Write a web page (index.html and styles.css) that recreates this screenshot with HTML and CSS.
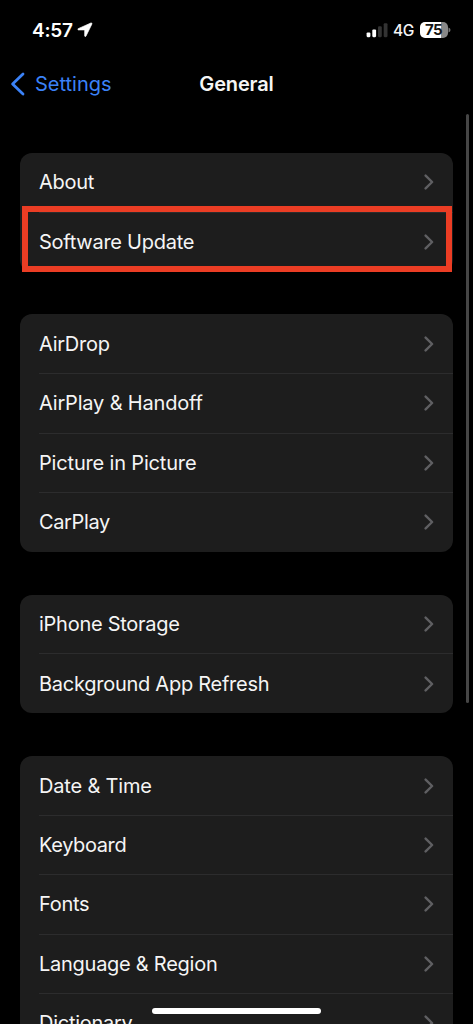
FILE: index.html
```
<!DOCTYPE html>
<html lang="en">
<head>
<meta charset="utf-8">
<title>General</title>
<link rel="stylesheet" href="styles.css">
</head>
<body>
<svg class="defs" width="0" height="0" aria-hidden="true"><symbol id="chevron" viewBox="0 0 10 16"><path d="M1.6 1.6 8.1 8 1.6 14.4" fill="none" stroke="#5f5f62" stroke-width="2.4" stroke-linecap="round" stroke-linejoin="round"/></symbol></svg>
<div class="screen">
  <header class="status">
    <div class="clock"><span class="time">4:57</span>
      <svg class="location" width="16" height="16" viewBox="0 0 16 16"><path d="M13.9 1 1.2 6.7Q.3 7.5 1.4 7.9H7.2Q7.7 7.9 7.7 8.4V14Q8.1 15.1 8.9 14.2L14.9 2Q15.2.6 13.9 1Z" fill="#fff" stroke="#fff" stroke-width=".7" stroke-linejoin="round"/></svg>
    </div>
    <div class="indicators">
      <svg class="signal" width="22" height="15" viewBox="0 0 22 15"><rect x=".6" y="9.5" width="3.8" height="4.7" rx="1.1" fill="#fff"/><rect x="6.3" y="6.5" width="3.8" height="7.7" rx="1.1" fill="#fff"/><rect x="12" y="3.3" width="3.8" height="10.9" rx="1.1" fill="#333"/><rect x="17.7" y=".2" width="3.8" height="14" rx="1.1" fill="#333"/></svg>
      <span class="network">4G</span>
      <div class="battery"><span class="level">75</span></div>
      <svg class="cap" width="3" height="6" viewBox="0 0 3 6"><path d="M.5.5Q2.5 1.4 2.5 3T.5 5.5Z" fill="#777"/></svg>
    </div>
  </header>
  <nav class="nav">
    <a class="back"><svg width="15" height="24" viewBox="0 0 15 24"><path d="M13 2 2.6 12 13 22" fill="none" stroke="#3b82f7" stroke-width="2.8" stroke-linecap="round" stroke-linejoin="round"/></svg><span>Settings</span></a>
    <h1 class="title">General</h1>
  </nav>
  <main class="groups">
    <section class="group">
      <div class="row"><span>About</span><svg class="chev"><use href="#chevron"/></svg></div>
      <div class="row"><span>Software Update</span><svg class="chev"><use href="#chevron"/></svg></div>
      <div class="highlight"></div>
    </section>
    <section class="group">
      <div class="row"><span>AirDrop</span><svg class="chev"><use href="#chevron"/></svg></div>
      <div class="row"><span class="wide">AirPlay &amp; Handoff</span><svg class="chev"><use href="#chevron"/></svg></div>
      <div class="row"><span class="wide">Picture in Picture</span><svg class="chev"><use href="#chevron"/></svg></div>
      <div class="row"><span class="tight">CarPlay</span><svg class="chev"><use href="#chevron"/></svg></div>
    </section>
    <section class="group">
      <div class="row"><span>iPhone Storage</span><svg class="chev"><use href="#chevron"/></svg></div>
      <div class="row"><span>Background App Refresh</span><svg class="chev"><use href="#chevron"/></svg></div>
    </section>
    <section class="group">
      <div class="row"><span class="wide">Date &amp; Time</span><svg class="chev"><use href="#chevron"/></svg></div>
      <div class="row"><span class="tight">Keyboard</span><svg class="chev"><use href="#chevron"/></svg></div>
      <div class="row"><span>Fonts</span><svg class="chev"><use href="#chevron"/></svg></div>
      <div class="row"><span>Language &amp; Region</span><svg class="chev"><use href="#chevron"/></svg></div>
      <div class="row"><span>Dictionary</span><svg class="chev"><use href="#chevron"/></svg></div>
    </section>
  </main>
  <div class="scrollbar"></div>
  <div class="home"></div>
</div>
</body>
</html>
```
FILE: styles.css
```
* { box-sizing: border-box; }
body { margin: 0; background: #000; color: #f5f5f5; font-family: Inter, "Liberation Sans", sans-serif; overflow: hidden; }
.defs { position: absolute; }
.screen { position: relative; width: 473px; height: 1024px; overflow: hidden; background: #000; }
.status { height: 60px; padding: 0 22px 0 32px; display: flex; justify-content: space-between; align-items: center; }
.clock { display: flex; align-items: center; gap: 4px; }
.time { font-size: 19px; font-weight: 600; letter-spacing: -.2px; color: #fff; }
.indicators { display: flex; align-items: center; }
.network { margin-left: 5px; width: 21px; font-size: 15.5px; font-weight: 500; letter-spacing: -.5px; white-space: nowrap; }
.battery { width: 28px; height: 16px; margin-left: 6px; padding-left: 5px; border-radius: 5px; background: linear-gradient(90deg, #fff 21px, #888 21px); display: flex; align-items: center; }
.level { color: #151515; font-size: 15px; line-height: 16px; font-weight: 700; letter-spacing: -.6px; }
.nav { height: 48px; padding: 0 10px; display: grid; grid-template-columns: 1fr auto 1fr; align-items: center; }
.back { display: flex; align-items: center; gap: 10px; color: #3b82f7; font-size: 20px; }
.title { margin: 0; font-size: 20px; font-weight: 600; letter-spacing: -.15px; }
.groups { padding: 44.8px 19.6px 0; display: flex; flex-direction: column; gap: 42.7px; }
.group { position: relative; flex: none; border-radius: 12px; background: #1d1d1d; }
.row { position: relative; height: 59.4px; padding: 0 19.4px; display: flex; align-items: center; justify-content: space-between; font-size: 20px; letter-spacing: -.26px; white-space: nowrap; }
.row .wide { letter-spacing: -.17px; }
.row .tight { letter-spacing: -.38px; }
.row + .row::before { content: ""; position: absolute; left: 19px; right: 0; top: -.5px; height: 1px; background: #2c2c2d; }
.chev { width: 10px; height: 16px; flex: none; }
.highlight { position: absolute; left: 2.4px; top: 53.2px; width: 430px; height: 66px; border: 6px solid #eb3d24; }
.scrollbar { position: absolute; left: 466px; top: 114px; width: 3px; height: 589px; border-radius: 2px; background: #464646; }
.home { position: absolute; left: 152px; top: 1008px; width: 169px; height: 6px; border-radius: 3px; background: #fff; }
```
